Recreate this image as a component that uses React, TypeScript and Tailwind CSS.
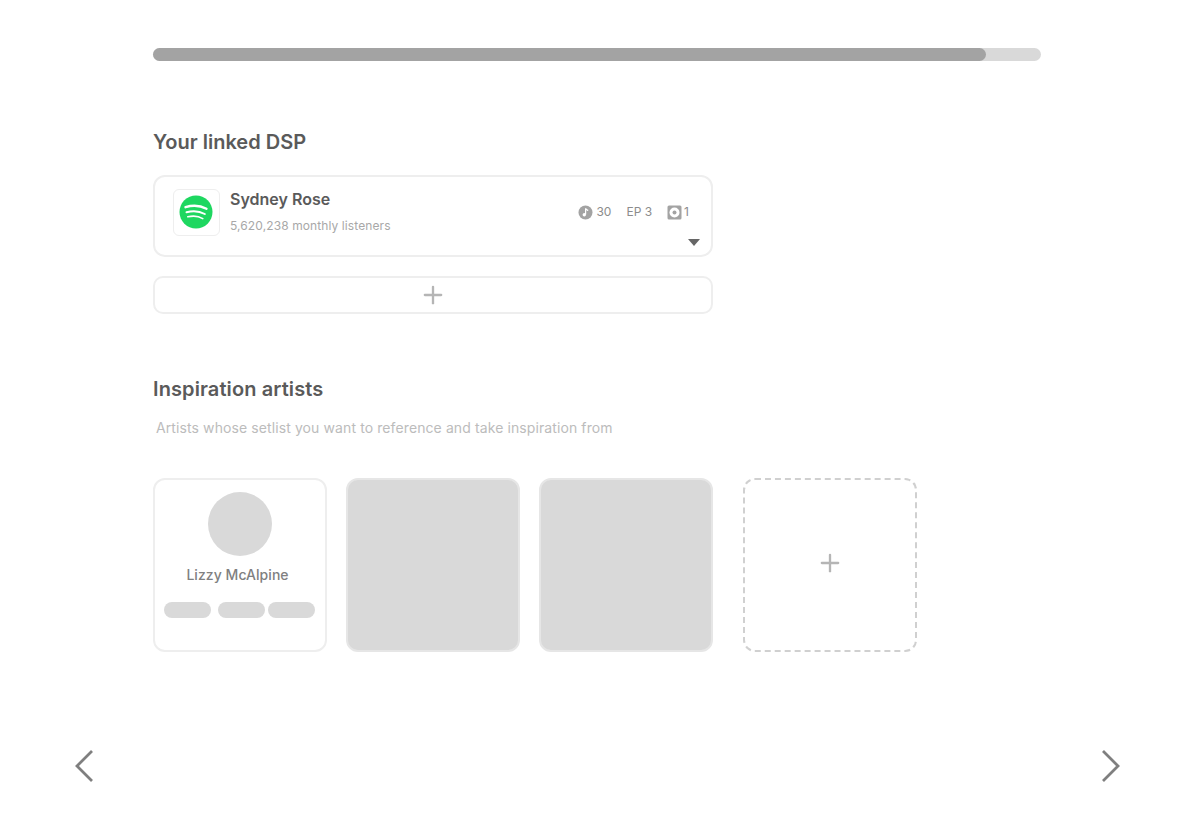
import { Plus } from "lucide-react";

function SpotifyLogo() {
  return (
    <svg width="34" height="34" viewBox="0 0 34 34" fill="none" className="mt-[-2px] ml-[-1px]">
      <circle cx="17" cy="17" r="16.5" fill="#1ED760" />
      <path d="M6.5 12.2C13 10.2 21.5 10.6 27.5 13.8" stroke="white" strokeWidth="2.4" strokeLinecap="round" />
      <path d="M7.5 17.2C13.5 15.6 20.5 16 25.8 19" stroke="white" strokeWidth="2" strokeLinecap="round" />
      <path d="M8.8 21.8C13.5 20.7 19.5 21 23.8 23.6" stroke="white" strokeWidth="1.6" strokeLinecap="round" />
    </svg>
  );
}

function NoteIcon() {
  return (
    <svg width="15" height="15" viewBox="0 0 15 15">
      <circle cx="7.5" cy="7.5" r="7" fill="#A3A3A3" />
      <path d="M7.6 3.4V9.4" stroke="white" strokeWidth="1.2" />
      <circle cx="6.3" cy="9.8" r="1.7" fill="white" />
      <path d="M7.6 3.4C8 4.8 9.4 5 10.2 5.6" stroke="white" strokeWidth="1.2" fill="none" />
    </svg>
  );
}

function AlbumIcon() {
  return (
    <svg width="15" height="15" viewBox="0 0 15 15">
      <rect x="0.5" y="0.5" width="14" height="14" rx="1.5" fill="#A3A3A3" />
      <circle cx="7.5" cy="7.5" r="5" fill="white" />
      <circle cx="7.5" cy="7.5" r="2" fill="#A3A3A3" />
    </svg>
  );
}

function Placeholder() {
  return <div className="w-[174px] h-[174px] rounded-[12px] border-2 border-[#e6e6e6] bg-[#d9d9d9]" />;
}

export default function App() {
  return (
    <div className="h-[834px] bg-white flex flex-col font-['Inter',sans-serif] overflow-hidden">
      <div className="ml-[153px] mt-[48px] w-[888px] h-[13px] rounded-full bg-[#d9d9d9]">
        <div className="w-[833px] h-full rounded-full bg-[#a3a3a3]" />
      </div>

      <h2 className="ml-[153px] mt-[68px] h-[26px] text-[20px] leading-[26px] font-semibold text-[#5a5a5a]">
        Your linked DSP
      </h2>

      <div className="ml-[153px] mt-[20px] w-[560px] h-[82px] rounded-[12px] border-2 border-[#eeeeee] flex items-start pl-[18px] pr-[22px] pt-[12px] relative">
        <div className="w-[47px] h-[47px] rounded-[6px] border border-[#eeeeee] flex items-center justify-center">
          <SpotifyLogo />
        </div>
        <div className="ml-[10px]">
          <div className="text-[16px] leading-[20px] font-semibold text-[#5a5a5a]">Sydney Rose</div>
          <div className="mt-[9px] text-[12px] leading-[16px] text-[#a8a8a8] tracking-[0.1px]">
            5,620,238 monthly listeners
          </div>
        </div>
        <div className="ml-auto mt-[15px] flex items-center text-[12px] leading-[16px] text-[#8c8c8c]">
          <NoteIcon />
          <span className="ml-[3px]">30</span>
          <span className="ml-[15px]">EP 3</span>
          <span className="ml-[15px]">
            <AlbumIcon />
          </span>
          <span className="ml-[2px]">1</span>
        </div>
        <div className="absolute right-[11px] bottom-[9px] w-0 h-0 border-x-[6px] border-x-transparent border-t-[7px] border-t-[#666666]" />
      </div>

      <div className="ml-[153px] mt-[19px] w-[560px] h-[38px] rounded-[10px] border-2 border-[#eeeeee] flex items-center justify-center">
        <Plus size={28} strokeWidth={2} className="text-[#b5b5b5]" />
      </div>

      <h2 className="ml-[153px] mt-[62px] h-[26px] text-[20px] leading-[26px] font-semibold text-[#5a5a5a] tracking-[0.1px]">
        Inspiration artists
      </h2>
      <p className="ml-[156px] mt-[16px] h-[20px] text-[14px] leading-[20px] text-[#bcbcbc] tracking-[0.1px]">
        Artists whose setlist you want to reference and take inspiration from
      </p>

      <div className="ml-[153px] mt-[40px] flex">
        <div className="w-[174px] h-[174px] rounded-[12px] border-2 border-[#eeeeee] flex flex-col items-center pt-[12px] px-[9px]">
          <div className="w-[64px] h-[64px] rounded-full bg-[#d9d9d9]" />
          <div className="mt-[10px] mr-[5px] text-[14px] leading-[18px] font-medium text-[#808080] tracking-[0.05px]">
            Lizzy McAlpine
          </div>
          <div className="mt-[18px] w-full flex">
            <div className="w-[47px] h-[16px] rounded-full bg-[#d9d9d9]" />
            <div className="ml-[7px] w-[47px] h-[16px] rounded-full bg-[#d9d9d9]" />
            <div className="ml-[3px] w-[47px] h-[16px] rounded-full bg-[#d9d9d9]" />
          </div>
        </div>
        <div className="ml-[19px]"><Placeholder /></div>
        <div className="ml-[19px]"><Placeholder /></div>
        <div className="ml-[30px] w-[174px] h-[174px] rounded-[12px] border-2 border-dashed border-[#d0d0d0] flex items-center justify-center pb-[4px]">
          <Plus size={28} strokeWidth={2} className="text-[#b5b5b5]" />
        </div>
      </div>

      <div className="mt-[97px] ml-[74px] w-[1047px] flex justify-between">
        <svg width="20" height="34" viewBox="0 0 20 34" fill="none">
          <path d="M18 2L3 17L18 32" stroke="#7f7f7f" strokeWidth="2.8" />
        </svg>
        <svg width="20" height="34" viewBox="0 0 20 34" fill="none">
          <path d="M2 2L17 17L2 32" stroke="#7f7f7f" strokeWidth="2.8" />
        </svg>
      </div>
    </div>
  );
}
